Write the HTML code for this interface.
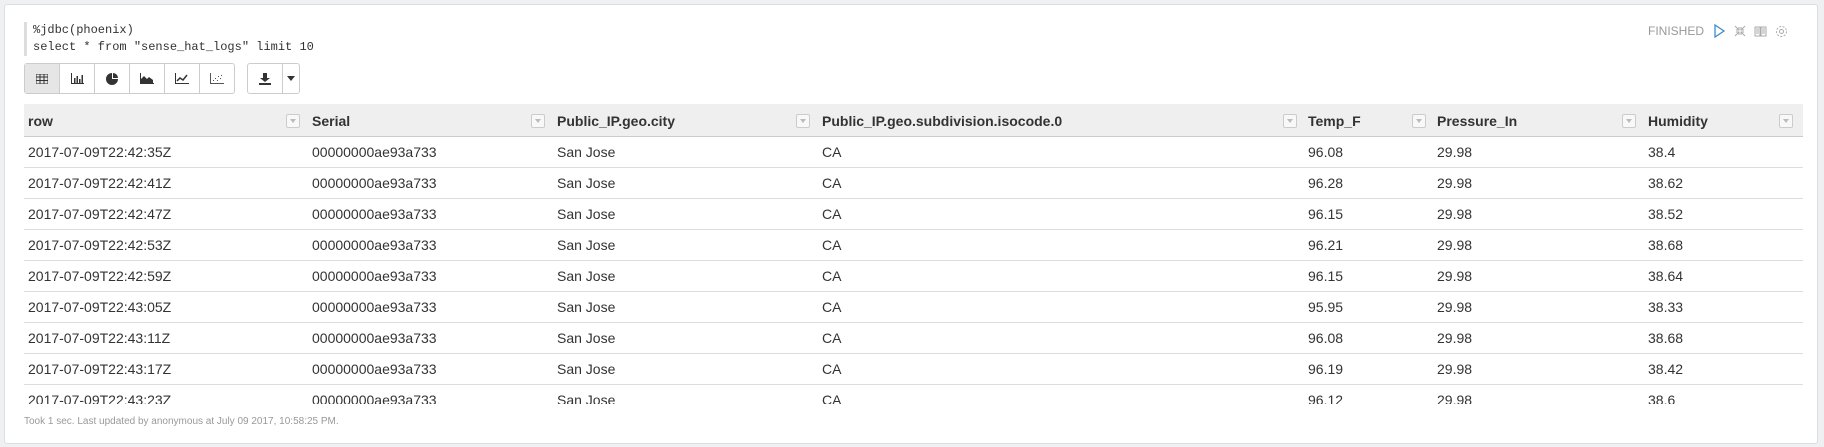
<!DOCTYPE html>
<html><head><meta charset="utf-8"><style>
body{margin:0;width:1824px;height:447px;background:#eef0f2;font-family:"Liberation Sans",Arial,sans-serif;overflow:hidden;position:relative}
.card{position:absolute;left:4px;top:4px;width:1812px;height:438px;background:#fff;border:1px solid #dcdfe2;border-radius:3px}
.code{position:absolute;left:24px;top:22px;border-left:3px solid #ddd;padding-left:6px;font-family:"Liberation Mono",monospace;font-size:12px;line-height:17px;color:#333}
.status{position:absolute;right:36px;top:24px;font-size:12px;color:#999;display:flex;align-items:center;gap:8px}
.tb{position:absolute;top:63px;height:29px;border:1px solid #ccc;border-radius:3px;display:flex;background:#fff}
.tb div{width:34px;height:29px;border-right:1px solid #ccc;display:flex;align-items:center;justify-content:center}
.tb div:last-child{border-right:none}
.tbl{position:absolute;left:24px;top:104px;width:1779px;height:300px;overflow:hidden}
.row{position:absolute;left:0;width:1779px;height:30px;border-bottom:1px solid #ddd;font-size:14px;color:#333}
.row span{position:absolute;top:7px;white-space:nowrap}
.hd{background:#efefef;height:32px;border-bottom:1px solid #ccc;font-weight:bold;font-size:14px;color:#333}
.hd span{top:9px}
.f{position:absolute;top:10px;width:12px;height:12px;border:1px solid #ccc;border-radius:2px;background:#f8f8f8}
.f:after{content:"";position:absolute;left:3px;top:4px;border-left:3px solid transparent;border-right:3px solid transparent;border-top:4px solid #bbb}
.foot{position:absolute;left:24px;top:416px;font-size:10px;color:#999}
</style></head><body>
<div class="card"></div>
<div class="code">%jdbc(phoenix)<br>select * from "sense_hat_logs" limit 10</div>
<div class="status">FINISHED
<svg width="14" height="14"><path d="M3 1L12 7L3 13Z" fill="none" stroke="#3c8dcd" stroke-width="1.3"/></svg>
<svg width="12" height="12" stroke="#aaa" fill="none"><path d="M1 1L5 5M5 2V5H2M11 1L7 5M7 2V5H10M1 11L5 7M2 7H5V10M11 11L7 7M10 7H7V10"/></svg>
<svg width="13" height="12" stroke="#aaa" fill="none"><path d="M1 2H6V11H1ZM7 2H12V11H7ZM2 4H5M2 6H5M2 8H5M8 4H11M8 6H11M8 8H11"/></svg>
<svg width="13" height="13" stroke="#aaa" fill="none"><circle cx="6.5" cy="6.5" r="2"/><circle cx="6.5" cy="6.5" r="5" stroke-dasharray="2 1.5"/></svg>
</div>
<div class="tb" style="left:24px">
<div style="background:#e6e6e6"><svg width="12" height="10"><path d="M0 0H12V10H0Z M0 3H12M0 6.5H12M4 0V10M8 0V10" stroke="#333" fill="none"/></svg></div>
<div><svg width="13" height="11"><path d="M0.5 0V10.5H13" stroke="#333" fill="none"/><path d="M3 5h1.5v5H3zM5.5 3h1.5v7H5.5zM8 6h1.5v4H8zM10.5 2h1.5v8h-1.5z" fill="#333"/></svg></div>
<div><svg width="12" height="12"><path d="M6 6V0A6 6 0 1 0 12 6Z" fill="#333"/><path d="M7 0A5 5 0 0 1 12 5H7Z" fill="#333"/></svg></div>
<div><svg width="14" height="11"><path d="M0.5 0V10.5H14" stroke="#333" fill="none"/><path d="M1 10L1 6L4 3L7 6L9 4L13 7V10Z" fill="#333"/></svg></div>
<div><svg width="14" height="11"><path d="M0.5 0V10.5H14" stroke="#333" fill="none"/><path d="M2 8L5 5L8 7L12 2" stroke="#333" stroke-width="1.5" fill="none"/></svg></div>
<div><svg width="14" height="11"><path d="M0.5 0V10.5H14" stroke="#555" fill="none"/><path d="M3 7h1v1H3zM5 5h1v1H5zM7 7h1v1H7zM8 3h1v1H8zM10 5h1v1h-1zM11 2h1v1h-1z" fill="#555"/></svg></div>
</div>
<div class="tb" style="left:247px">
<div><svg width="12" height="12"><path d="M4 0h4v5h3L6 9 1 5h3z M0 10h12v2H0z" fill="#333"/></svg></div>
<div style="width:16px"><svg width="8" height="5"><path d="M0 0h8L4 5z" fill="#333"/></svg></div>
</div>
<div class="tbl">
<div class="row hd" style="top:0">
<span style="left:4px">row</span><div class="f" style="left:262px"></div>
<span style="left:288px">Serial</span><div class="f" style="left:507px"></div>
<span style="left:533px">Public_IP.geo.city</span><div class="f" style="left:772px"></div>
<span style="left:798px">Public_IP.geo.subdivision.isocode.0</span><div class="f" style="left:1259px"></div>
<span style="left:1284px">Temp_F</span><div class="f" style="left:1388px"></div>
<span style="left:1413px">Pressure_In</span><div class="f" style="left:1598px"></div>
<span style="left:1624px">Humidity</span><div class="f" style="left:1755px"></div>
</div>
<div id="rows"></div>
</div>
<div class="foot">Took 1 sec. Last updated by anonymous at July 09 2017, 10:58:25 PM.</div>
<script>
var d=[["2017-07-09T22:42:35Z","96.08","38.4"],["2017-07-09T22:42:41Z","96.28","38.62"],["2017-07-09T22:42:47Z","96.15","38.52"],["2017-07-09T22:42:53Z","96.21","38.68"],["2017-07-09T22:42:59Z","96.15","38.64"],["2017-07-09T22:43:05Z","95.95","38.33"],["2017-07-09T22:43:11Z","96.08","38.68"],["2017-07-09T22:43:17Z","96.19","38.42"],["2017-07-09T22:43:23Z","96.12","38.6"]];
var h="";d.forEach(function(r,i){h+='<div class="row" style="top:'+(33+31*i)+'px"><span style="left:4px">'+r[0]+'</span><span style="left:288px">00000000ae93a733</span><span style="left:533px">San Jose</span><span style="left:798px">CA</span><span style="left:1284px">'+r[1]+'</span><span style="left:1413px">29.98</span><span style="left:1624px">'+r[2]+'</span></div>'});
document.getElementById("rows").outerHTML=h;
</script>
</body></html>
